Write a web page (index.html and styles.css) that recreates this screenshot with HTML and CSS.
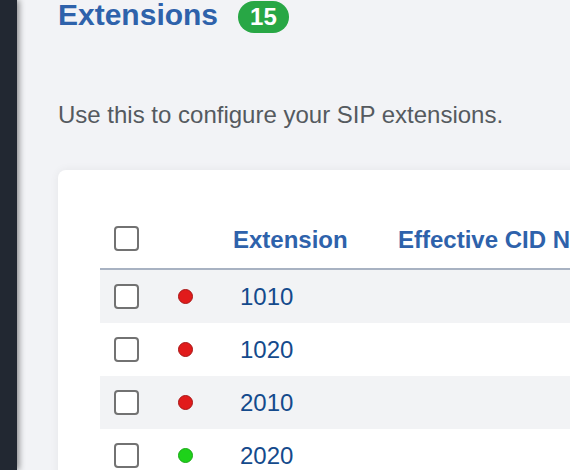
FILE: index.html
```html
<!DOCTYPE html>
<html>
<head>
<meta charset="utf-8">
<link rel="stylesheet" href="styles.css">
</head>
<body>
<div class="layout">
  <aside class="sidebar"></aside>
  <main class="main">
    <div class="page-header">
      <h1 class="title">Extensions</h1>
      <span class="badge">15</span>
    </div>
    <p class="subtitle">Use this to configure your SIP extensions.</p>
    <section class="card">
      <div class="table">
        <div class="row head">
          <div class="cell"><span class="checkbox"></span></div>
          <div class="cell"></div>
          <div class="cell th">Extension</div>
          <div class="cell th">Effective CID Name</div>
        </div>
        <div class="row shaded">
          <div class="cell"><span class="checkbox"></span></div>
          <div class="cell"><span class="dot red"></span></div>
          <div class="cell num">1010</div>
          <div class="cell"></div>
        </div>
        <div class="row">
          <div class="cell"><span class="checkbox"></span></div>
          <div class="cell"><span class="dot red"></span></div>
          <div class="cell num">1020</div>
          <div class="cell"></div>
        </div>
        <div class="row shaded">
          <div class="cell"><span class="checkbox"></span></div>
          <div class="cell"><span class="dot red"></span></div>
          <div class="cell num">2010</div>
          <div class="cell"></div>
        </div>
        <div class="row">
          <div class="cell"><span class="checkbox"></span></div>
          <div class="cell"><span class="dot green"></span></div>
          <div class="cell num">2020</div>
          <div class="cell"></div>
        </div>
      </div>
    </section>
  </main>
</div>
</body>
</html>
```

FILE: styles.css
```css
html, body {
  margin: 0;
  padding: 0;
  height: 100%;
  overflow: hidden;
  background: #f2f3f6;
  font-family: "Liberation Sans", Arial, sans-serif;
}

.layout {
  display: flex;
  height: 470px;
}

.sidebar {
  width: 17px;
  flex: none;
  background: #222832;
  box-shadow: 2px 0 6px rgba(0, 0, 0, 0.45);
  position: relative;
  z-index: 1;
}

.main {
  flex: 1;
  padding-left: 41px;
  overflow: hidden;
}

.page-header {
  display: flex;
  align-items: flex-start;
  gap: 20px;
  height: 34px;
}

.title {
  margin: 0;
  font-size: 30px;
  line-height: 29px;
  font-weight: bold;
  color: #2e62ab;
}

.badge {
  margin-top: 1px;
  height: 32px;
  line-height: 32px;
  padding: 0 12px;
  border-radius: 16px;
  background: #28a745;
  color: #fff;
  font-size: 24px;
  font-weight: bold;
}

.subtitle {
  margin: 67px 0 0;
  font-size: 24px;
  line-height: 28px;
  color: #555a5f;
}

.card {
  margin-top: 41px;
  width: 620px;
  background: #fff;
  border-radius: 8px;
  box-shadow: 0 0 10px rgba(0, 0, 0, 0.06);
  padding: 38px 0 0 42px;
  height: 400px;
}

.table {
  display: flex;
  flex-direction: column;
}

.row {
  display: grid;
  grid-template-columns: 64px 55px 165px 1fr;
  height: 53px;
  align-items: center;
}

.row.head {
  height: 60px;
  border-bottom: 2px solid #a8b2c2;
}

.row.shaded {
  background: #f2f3f5;
}

.cell {
  padding-left: 14px;
  white-space: nowrap;
  display: flex;
  align-items: center;
}

.th {
  padding-top: 4px;
  font-size: 24px;
  font-weight: bold;
  color: #2e62ab;
}

.num {
  padding-left: 21px;
  font-size: 24px;
  color: #144a8c;
}

.checkbox {
  display: block;
  width: 21px;
  height: 21px;
  border: 2px solid #727272;
  border-radius: 4px;
  background: #fff;
}

.dot {
  display: block;
  width: 13px;
  height: 13px;
  border-radius: 50%;
}

.dot.red {
  background: #e11b1b;
  border: 1px solid #a81616;
}

.dot.green {
  background: #1ed21a;
  border: 1px solid #1aa816;
}
```
